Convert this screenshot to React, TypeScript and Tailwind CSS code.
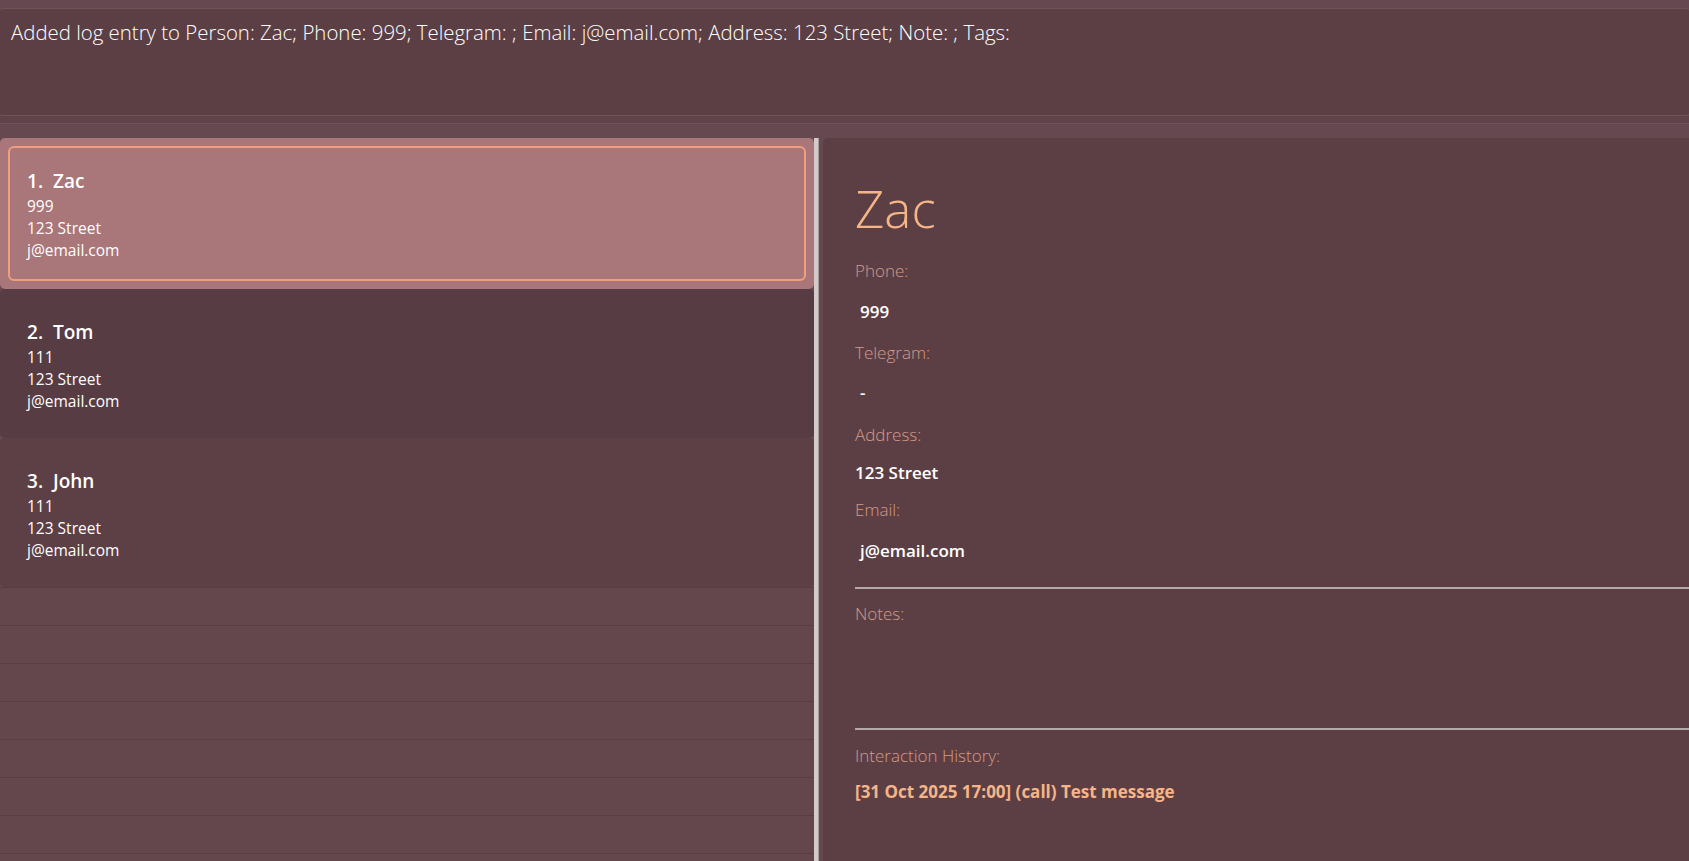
const persons = [
  { name: "Zac", phone: "999", address: "123 Street", email: "j@email.com" },
  { name: "Tom", phone: "111", address: "123 Street", email: "j@email.com" },
  { name: "John", phone: "111", address: "123 Street", email: "j@email.com" },
];

const font = "font-['Open_Sans','Noto_Sans',sans-serif]";

function PersonCard({ index, selected, bg, height }: { index: number; selected: boolean; bg: string; height: string }) {
  const p = persons[index];
  return (
    <div className={`${bg} ${height} shrink-0 rounded-[5px] p-[8px]`}>
      <div
        className={`h-full rounded-[6px] border-2 pl-[17px] pt-[19px] ${
          selected ? "border-[#f19f7b]" : "border-transparent"
        }`}
      >
        <div className="text-[19px] font-semibold leading-[28px] text-white">
          {index + 1}.&nbsp;&nbsp;{p.name}
        </div>
        <div className="text-[15.5px] leading-[22px] text-white">{p.phone}</div>
        <div className="text-[15.5px] leading-[22px] text-white">{p.address}</div>
        <div className="text-[15.5px] leading-[22px] text-white">{p.email}</div>
      </div>
    </div>
  );
}

function Field({ children, className }: { children: React.ReactNode; className: string }) {
  return <div className={`flex h-[30px] items-center ${className}`}>{children}</div>;
}

const label = "text-[17px] font-light text-[#d49a86]";
const value = "text-[17px] font-semibold text-white";

export default function App() {
  return (
    <div className={`flex h-[861px] w-[1689px] flex-col overflow-hidden bg-[#654850] ${font}`}>
      <div className="mt-[8px] h-[108px] shrink-0 rounded-[3px] border-y border-[#6e535a] bg-[#5c3f45] pl-[11px] pt-[9px]">
        <p className="text-[20.4px] font-light leading-[28px] text-white">
          Added log entry to Person: Zac; Phone: 999; Telegram: ; Email: j@email.com; Address: 123 Street; Note: ; Tags:
        </p>
      </div>
      <div className="h-[8px] shrink-0 border-b border-[#6e535a] bg-[#5f4349]" />
      <div className="h-[14px] shrink-0" />

      <div className="flex min-h-0 flex-1">
        <div className="flex w-[814px] shrink-0 flex-col overflow-hidden">
          <PersonCard index={0} selected bg="bg-[#a9767a]" height="h-[151px]" />
          <PersonCard index={1} selected={false} bg="bg-[#573d43]" height="h-[149px]" />
          <PersonCard index={2} selected={false} bg="bg-[#5c4046]" height="h-[149px]" />
          {Array.from({ length: 8 }).map((_, i) => (
            <div key={i} className="h-[38px] shrink-0 border-t border-[#593d43] bg-[#64474c]" />
          ))}
        </div>

        <div className="w-[5px] shrink-0 border-r border-[#a99c9c] bg-[#d3cbcb]" />
        <div className="w-[4px] shrink-0" />

        <div className="flex-1 rounded-tl-[5px] bg-[#5c3f45] pl-[32px] pt-[37px]">
          <div className="flex h-[66px] items-center text-[51px] font-light leading-[66px] text-[#f6b587]">
            Zac
          </div>
          <Field className={`mt-[15px] ${label}`}>Phone:</Field>
          <Field className={`mt-[11px] pl-[5px] ${value}`}>999</Field>
          <Field className={`mt-[11px] ${label}`}>Telegram:</Field>
          <Field className={`mt-[10px] pl-[5px] ${value}`}>-</Field>
          <Field className={`mt-[12px] ${label}`}>Address:</Field>
          <Field className={`mt-[8px] ${value}`}>123 Street</Field>
          <Field className={`mt-[7px] ${label}`}>Email:</Field>
          <Field className={`mt-[11px] pl-[5px] ${value}`}>j@email.com</Field>
          <div className="mt-[21px] h-[2px] bg-[#b3a9a9]" />
          <Field className={`mt-[10px] ${label}`}>Notes:</Field>
          <div className="mt-[99px] h-[2px] bg-[#b3a9a9]" />
          <Field className={`mt-[11px] ${label}`}>Interaction History:</Field>
          <Field className="mt-[6px] text-[17px] font-bold text-[#f6b587]">
            [31 Oct 2025 17:00] (call) Test message
          </Field>
        </div>
      </div>
    </div>
  );
}
